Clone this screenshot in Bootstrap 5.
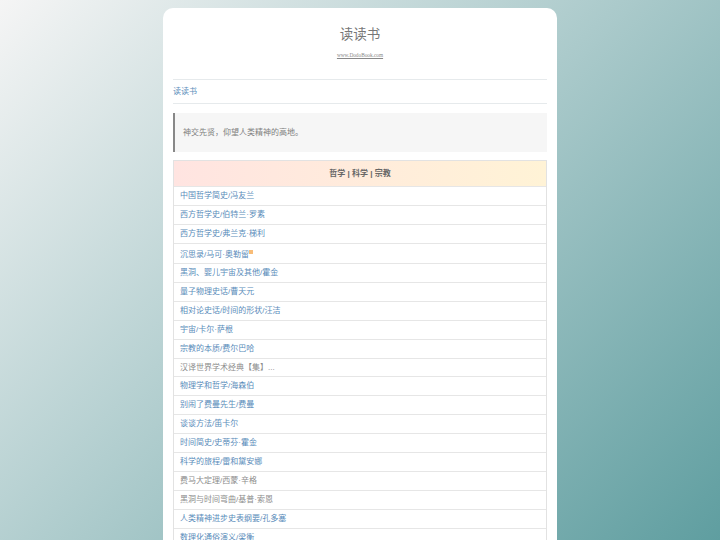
<!DOCTYPE html>
<html lang="zh">
<head>
<meta charset="utf-8">
<title>读读书</title>
<link href="https://cdn.jsdelivr.net/npm/bootstrap@5.3.0/dist/css/bootstrap.min.css" rel="stylesheet">
<style>
html,body{height:100%;overflow:hidden}
body{background:linear-gradient(135deg,#f5f5f5 0%,#5f9ea0 100%) fixed;font-family:"Liberation Sans","Noto Sans CJK SC",sans-serif;color:#666;font-size:8px;line-height:1.4}
.sheet{width:394px;margin:8px auto 0;background:#fff;border-radius:10px 10px 0 0;padding:10px;height:600px}
.site-title{font-size:13.5px;font-weight:400;margin:7px 0 6px;line-height:20px;color:#777}
.site-url{font-family:"Liberation Serif",serif;font-size:5.3px;color:#888;line-height:8px;display:block}
.crumb{margin-top:20px;border-top:1px solid #e6eaec;border-bottom:1px solid #e6eaec;height:25px;line-height:23px}
.crumb a,.shelf a{color:#5a8cba;text-decoration:none}
.motto{background:#f6f6f6;border-left:2px solid #888;margin-top:9px;height:39px;padding:0 8px;line-height:39px;color:#808080}
.shelf{margin-top:8px;border:1px solid #e2e2e2;border-bottom:0}
.shelf-head{background:linear-gradient(90deg,#ffe4e1,#fff3d6);height:26px;line-height:25px;font-weight:700;text-align:center;color:#666;border-bottom:1px solid #e6e6e6}
.shelf-row{height:19px;line-height:18.5px;padding:0 6px;border-bottom:1px solid #e6e6e6;color:#8c8c8c}
.shelf-row.tall{height:20px;line-height:21px}
.shelf-row.short{height:18px;line-height:18px}
.new-dot{display:inline-block;width:4px;height:4px;background:#f8bc78;vertical-align:3px}
</style>
</head>
<body>
<div class="sheet">
  <div class="text-center">
    <h1 class="site-title">读读书</h1>
    <a class="site-url" href="#">www.DodoBook.com</a>
  </div>
  <div class="crumb"><a href="#">读读书</a></div>
  <div class="motto">神交先贤，仰望人类精神的高地。</div>
  <div class="shelf">
    <div class="shelf-head">哲学 | 科学 | 宗教</div>
    <div class="shelf-row"><a href="#">中国哲学简史/冯友兰</a></div>
    <div class="shelf-row"><a href="#">西方哲学史/伯特兰·罗素</a></div>
    <div class="shelf-row"><a href="#">西方哲学史/弗兰克·梯利</a></div>
    <div class="shelf-row tall"><a href="#">沉思录/马可·奥勒留</a><span class="new-dot"></span></div>
    <div class="shelf-row"><a href="#">黑洞、婴儿宇宙及其他/霍金</a></div>
    <div class="shelf-row"><a href="#">量子物理史话/曹天元</a></div>
    <div class="shelf-row"><a href="#">相对论史话/时间的形状/汪洁</a></div>
    <div class="shelf-row"><a href="#">宇宙/卡尔·萨根</a></div>
    <div class="shelf-row"><a href="#">宗教的本质/费尔巴哈</a></div>
    <div class="shelf-row short">汉译世界学术经典【集】...</div>
    <div class="shelf-row"><a href="#">物理学和哲学/海森伯</a></div>
    <div class="shelf-row"><a href="#">别闹了费曼先生/费曼</a></div>
    <div class="shelf-row"><a href="#">谈谈方法/笛卡尔</a></div>
    <div class="shelf-row"><a href="#">时间简史/史蒂芬·霍金</a></div>
    <div class="shelf-row"><a href="#">科学的旅程/雷和黛安娜</a></div>
    <div class="shelf-row">费马大定理/西蒙·辛格</div>
    <div class="shelf-row">黑洞与时间弯曲/基普·索恩</div>
    <div class="shelf-row"><a href="#">人类精神进步史表纲要/孔多塞</a></div>
    <div class="shelf-row"><a href="#">数理化通俗演义/梁衡</a></div>
  </div>
</div>
<script src="https://cdn.jsdelivr.net/npm/bootstrap@5.3.0/dist/js/bootstrap.bundle.min.js"></script>
</body>
</html>
